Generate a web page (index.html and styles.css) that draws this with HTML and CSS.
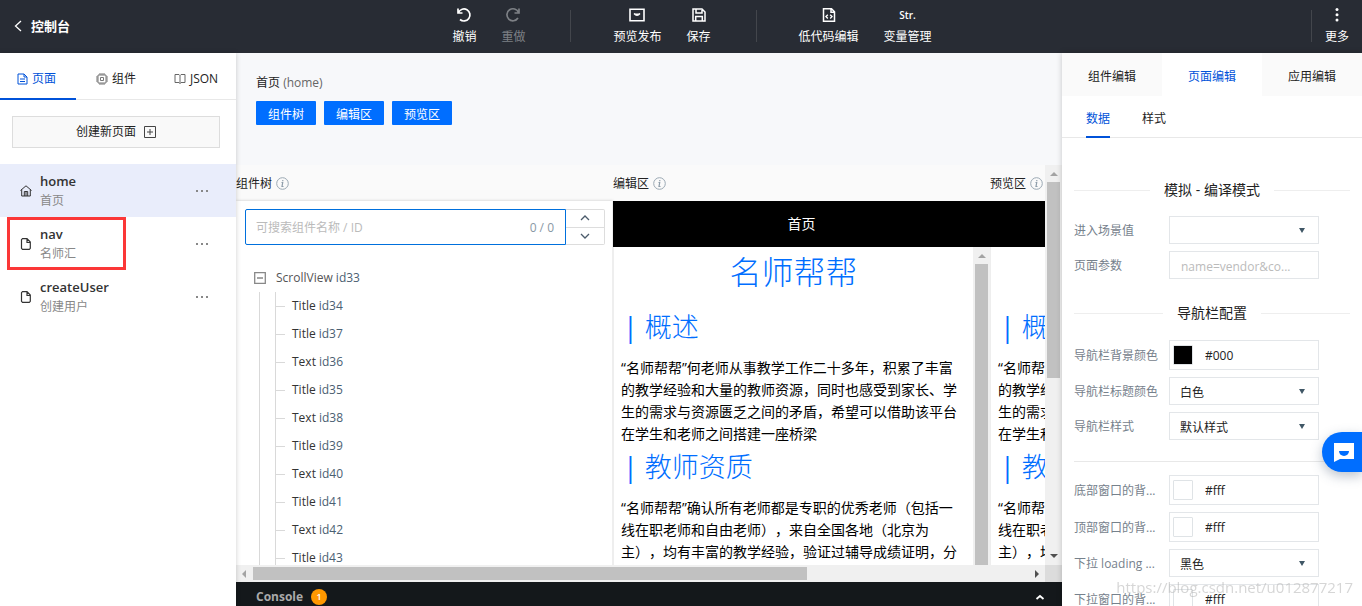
FILE: index.html
```
<!DOCTYPE html>
<html lang="zh-CN">
<head>
<meta charset="utf-8">
<title>控制台</title>
<link rel="stylesheet" href="styles.css">
</head>
<body>
<div class="app">
  <header class="topbar">
    <a class="back" href="#">
      <svg width="8" height="12" viewBox="0 0 8 12"><path d="M7 1 1.500 6 7 11" fill="none" stroke="#fff" stroke-width="1.300"/></svg>
      <span>控制台</span>
    </a>
    <nav class="tools">
      <div class="tool-group">
        <button class="tool"><svg width="16" height="16" viewBox="0 0 16 16"><path d="M2 1.500v4.500h4.500M2.500 5.500A6 6 0 1 1 4 12.500" fill="none" stroke="#fff" stroke-width="1.700"/></svg><span>撤销</span></button>
        <button class="tool tool-off"><svg width="16" height="16" viewBox="0 0 16 16"><path d="M14 1.500v4.500H9.500M13.500 5.500A6 6 0 1 0 13 11" fill="none" stroke="#7d8085" stroke-width="1.700"/></svg><span>重做</span></button>
      </div>
      <div class="tool-group">
        <button class="tool"><svg width="16" height="16" viewBox="0 0 16 16"><path d="M1 2.200h14v11.600H1z" fill="none" stroke="#fff" stroke-width="1.600"/><path d="M5 6.500q3 3.500 6 0" fill="#fff" stroke="#fff" stroke-width="1.300"/></svg><span>预览发布</span></button>
        <button class="tool"><svg width="16" height="16" viewBox="0 0 16 16"><path d="M2 2h9l3 3v9H2zM5 2v4h6V3M4.700 14V9.500h6.600V14" fill="none" stroke="#fff" stroke-width="1.500"/></svg><span>保存</span></button>
      </div>
      <div class="tool-group">
        <button class="tool"><svg width="16" height="16" viewBox="0 0 16 16"><path d="M2.500 1.700h8l3 3v9.600h-11zM10 2v3.200h3.500" fill="none" stroke="#fff" stroke-width="1.500"/><path d="M6.800 7.800 5 9.600l1.800 1.800M9.200 7.800 11 9.600l-1.800 1.800" fill="none" stroke="#fff" stroke-width="1.400"/></svg><span>低代码编辑</span></button>
        <button class="tool"><b class="str">Str.</b><span>变量管理</span></button>
      </div>
    </nav>
    <button class="tool more"><svg width="16" height="16" viewBox="0 0 16 16"><g fill="#fff"><circle cx="8" cy="2.500" r="1.500"/><circle cx="8" cy="7.700" r="1.500"/><circle cx="8" cy="13" r="1.500"/></g></svg><span>更多</span></button>
  </header>

  <div class="body">
    <aside class="pages">
      <nav class="page-tabs">
        <button class="page-tab on"><svg width="11" height="12" viewBox="0 0 11 12"><path d="M1 1h6l3 3v7H1zM7 1v3h3M3 6h5M3 8.500h5" fill="none" stroke="#0052d9"/></svg>页面</button>
        <button class="page-tab"><svg width="12" height="12" viewBox="0 0 12 12"><path d="M2 2h8v8H2zM4.500 4.500h3v3h-3zM4 0v2M6 0v2M8 0v2M4 10v2M6 10v2M8 10v2M0 4h2M0 6h2M0 8h2M10 4h2M10 6h2M10 8h2" fill="none" stroke="#777"/></svg>组件</button>
        <button class="page-tab"><svg width="12" height="12" viewBox="0 0 12 12"><path d="M1 1.500h4l1 1 1-1h4v8H7l-1 1-1-1H1zM6 2.500v8" fill="none" stroke="#666"/></svg>JSON</button>
      </nav>
      <button class="create">创建新页面
        <svg width="12" height="12" viewBox="0 0 12 12"><path d="M.5.5h11v11H.5zM6 3v6M3 6h6" fill="none" stroke="#444"/></svg>
      </button>
      <ul class="page-list">
        <li class="page current">
          <svg width="12" height="12" viewBox="0 0 12 12"><path d="M.5 5.500 6 .8l5.500 4.700M1.700 4.500V11h8.600V4.500M4.300 11V6.500h3.400V11M6 7v4" fill="none" stroke="#333"/></svg>
          <div class="page-name"><b>home</b><span>首页</span></div><button class="dots" aria-label="更多操作"><i></i><i></i><i></i></button>
        </li>
        <li class="page">
          <svg width="12" height="12" viewBox="0 0 12 12"><path d="M2.500.7H7L10.300 4v6.300l-1 1H2.500l-1-1V1.700zM7 1v3.500h3" fill="none" stroke="#333" stroke-width="1.200"/></svg>
          <div class="page-name"><b>nav</b><span>名师汇</span></div><button class="dots" aria-label="更多操作"><i></i><i></i><i></i></button>
          <div class="mark"></div>
        </li>
        <li class="page">
          <svg width="12" height="12" viewBox="0 0 12 12"><path d="M2.500.7H7L10.300 4v6.300l-1 1H2.500l-1-1V1.700zM7 1v3.500h3" fill="none" stroke="#333" stroke-width="1.200"/></svg>
          <div class="page-name"><b>createUser</b><span>创建用户</span></div><button class="dots" aria-label="更多操作"><i></i><i></i><i></i></button>
        </li>
      </ul>
    </aside>

    <main class="center">
      <section class="intro">
        <h1>首页 <small>(home)</small></h1>
        <div class="intro-buttons"><button>组件树</button><button>编辑区</button><button>预览区</button></div>
      </section>
      <section class="workspace">
        <div class="viewport">
          <div class="columns">
            <section class="column">
              <h2><span>组件树</span> <svg width="13" height="13" viewBox="0 0 13 13"><circle cx="6.500" cy="6.500" r="5.800" fill="none" stroke="#9aa8b3"/><path d="M6.800 3v1.300M5.500 5.500h1.200L6 9.500h1.500" fill="none" stroke="#8e9daa" stroke-width="1.200"/></svg></h2>
              <div class="tree-panel">
                <div class="search">
                  <label class="search-box"><input type="text" placeholder="可搜索组件名称 / ID"><span>0 / 0</span></label>
                  <div class="steps">
                    <button aria-label="上一个"><svg width="10" height="6" viewBox="0 0 10 6"><path d="m1 5 4-4 4 4" fill="none" stroke="#4b5b6b" stroke-width="1.300"/></svg></button>
                    <button aria-label="下一个"><svg width="10" height="6" viewBox="0 0 10 6"><path d="m1 1 4 4 4-4" fill="none" stroke="#4b5b6b" stroke-width="1.300"/></svg></button>
                  </div>
                </div>
                <div class="root">
                  <svg width="12" height="12" viewBox="0 0 12 12"><path d="M.7.7h10.600v10.600H.7zM3 6h6" fill="none" stroke="#888" stroke-width="1.300"/></svg>
                  <span>ScrollView <em>id33</em></span>
                </div>
                <div class="branch">
                  <ul class="nodes">
                    <li>Title <em>id34</em></li>
                    <li>Title <em>id37</em></li>
                    <li>Text <em>id36</em></li>
                    <li>Title <em>id35</em></li>
                    <li>Text <em>id38</em></li>
                    <li>Title <em>id39</em></li>
                    <li>Text <em>id40</em></li>
                    <li>Title <em>id41</em></li>
                    <li>Text <em>id42</em></li>
                    <li>Title <em>id43</em></li>
                  </ul>
                </div>
              </div>
            </section>
            <section class="column">
              <h2><span>编辑区</span> <svg width="13" height="13" viewBox="0 0 13 13"><circle cx="6.500" cy="6.500" r="5.800" fill="none" stroke="#9aa8b3"/><path d="M6.800 3v1.300M5.500 5.500h1.200L6 9.500h1.500" fill="none" stroke="#8e9daa" stroke-width="1.200"/></svg></h2>
              <div class="phone-bar">首页</div>
              <div class="phone">
                <article class="doc">
                  <h3>名师帮帮</h3>
                  <h4><b>|</b> 概述</h4>
                  <p>“名师帮帮”何老师从事教学工作二十多年，积累了丰富的教学经验和大量的教师资源，同时也感受到家长、学生的需求与资源匮乏之间的矛盾，希望可以借助该平台在学生和老师之间搭建一座桥梁</p>
                  <h4><b>|</b> 教师资质</h4>
                  <p>“名师帮帮”确认所有老师都是专职的优秀老师（包括一线在职老师和自由老师），来自全国各地（北京为主），均有丰富的教学经验，验证过辅导成绩证明，分</p>
                </article>
                <div class="vbar"><i class="up"></i><div class="thumb"></div></div>
              </div>
            </section>
            <section class="column">
              <h2><span>预览区</span> <svg width="13" height="13" viewBox="0 0 13 13"><circle cx="6.500" cy="6.500" r="5.800" fill="none" stroke="#9aa8b3"/><path d="M6.800 3v1.300M5.500 5.500h1.200L6 9.500h1.500" fill="none" stroke="#8e9daa" stroke-width="1.200"/></svg></h2>
              <div class="phone-bar"></div>
              <div class="phone">
                <article class="doc">
                  <h3>名师帮帮</h3>
                  <h4><b>|</b> 概述</h4>
                  <p>“名师帮帮”何老师从事教学工作二十多年，积累了丰富的教学经验和大量的教师资源，同时也感受到家长、学生的需求与资源匮乏之间的矛盾，希望可以借助该平台在学生和老师之间搭建一座桥梁</p>
                  <h4><b>|</b> 教师资质</h4>
                  <p>“名师帮帮”确认所有老师都是专职的优秀老师（包括一线在职老师和自由老师），来自全国各地（北京为主），均有丰富的教学经验，验证过辅导成绩证明，分</p>
                </article>
                <div class="vbar"><i class="up"></i><div class="thumb"></div></div>
              </div>
            </section>
          </div>
        </div>
        <div class="vbar"><i class="up"></i><div class="thumb half"></div><i class="down"></i></div>
        <div class="hbar"><i class="left"></i><div class="hthumb"></div><i class="right"></i></div>
        <div class="corner"></div>
      </section>
      <footer class="console">
        <b>Console</b><span class="count">1</span>
        <svg width="10" height="7" viewBox="0 0 10 7"><path d="m1.500 5 3.500-3 3.500 3" fill="none" stroke="#fff" stroke-width="1.800"/></svg>
      </footer>
    </main>

    <aside class="props">
      <nav class="prop-tabs"><button>组件编辑</button><button class="on">页面编辑</button><button>应用编辑</button></nav>
      <nav class="sub-tabs"><button class="on">数据</button><button>样式</button></nav>
      <form class="fields">
        <h5>模拟 - 编译模式</h5>
        <div class="field"><label for="scene">进入场景值</label><div class="pick"><select id="scene"><option></option></select></div></div>
        <div class="field"><label for="param">页面参数</label><input id="param" class="box" type="text" placeholder="name=vendor&amp;co..."></div>
        <h5 class="second">导航栏配置</h5>
        <div class="field"><label for="navbg">导航栏背景颜色</label><div class="color"><input type="color" value="#000000" aria-label="选择颜色"><input id="navbg" type="text" value="#000"></div></div>
        <div class="field"><label for="navtitle">导航栏标题颜色</label><div class="pick"><select id="navtitle"><option>白色</option></select></div></div>
        <div class="field"><label for="navstyle">导航栏样式</label><div class="pick"><select id="navstyle"><option>默认样式</option></select></div></div>
        <hr>
        <div class="field"><label for="bottombg">底部窗口的背...</label><div class="color"><input type="color" value="#ffffff" aria-label="选择颜色"><input id="bottombg" type="text" value="#fff"></div></div>
        <div class="field"><label for="topbg">顶部窗口的背...</label><div class="color"><input type="color" value="#ffffff" aria-label="选择颜色"><input id="topbg" type="text" value="#fff"></div></div>
        <div class="field"><label for="loading">下拉 loading ...</label><div class="pick"><select id="loading"><option>黑色</option></select></div></div>
        <div class="field"><label for="pullbg">下拉窗口的背...</label><div class="color"><input type="color" value="#ffffff" aria-label="选择颜色"><input id="pullbg" type="text" value="#fff"></div></div>
      </form>
    </aside>
  </div>
</div>
<button class="chat" aria-label="客服"><svg width="20" height="20" viewBox="0 0 20 20"><path d="M0 1h20v16H6l-6 3z" fill="#fff"/><path d="M5 9h10a5 5 0 0 1-10 0z" fill="#006eff"/></svg></button>
<div class="watermark">https://blog.csdn.net/u012877217</div>
</body>
</html>
```
FILE: styles.css
```
* { box-sizing: border-box; }
body, h1, h2, h3, h4, h5, p, ul { margin: 0; padding: 0; }
body, button, input, select {
  font: 12px/18px "Open Sans", "Noto Sans CJK SC", sans-serif;
  color: #222;
}
button { border: 0; padding: 0; background: none; }
input, select { outline: 0; }
ul { list-style: none; }
svg { flex: none; display: block; }
em { font-style: normal; color: #4a6072; }

.app { display: flex; flex-direction: column; height: 100vh; overflow: hidden; background: #fff; }

/* Top bar */
.topbar {
  display: grid; grid-template-columns: 1fr auto 1fr; align-items: center;
  flex: none; height: 53px; padding-bottom: 1px; background: #282c34; color: #fff;
}
.back { display: flex; align-items: center; gap: 9px; padding-left: 14px; color: #fff; font-size: 13px; font-weight: 700; text-decoration: none; }
.tools { display: flex; padding-left: 22px; }
.tool-group { display: flex; gap: 25px; padding: 0 45px 0 42px; height: 32px; align-items: center; }
.tool-group + .tool-group { border-left: 1px solid #43464c; }
.tool-group:first-child { padding-left: 0; }
.tool-group:last-child { padding-right: 0; }
.tool { display: flex; flex-direction: column; align-items: center; gap: 5px; color: #fff; }
.tool-off { color: #7d8085; }
.str { height: 16px; font-size: 10px; line-height: 16px; font-weight: 600; }
.more { justify-self: end; height: 32px; justify-content: center; padding: 0 13px; border-left: 1px solid #43464c; }

.body { display: flex; flex: 1; min-height: 0; }

/* Page list */
.pages { flex: none; width: 236px; position: relative; z-index: 1; background: #fff; box-shadow: 0 0 5px rgba(0,0,0,.2); }
.page-tabs { display: grid; grid-template-columns: 76px 1fr 1fr; height: 47px; border-bottom: 1px solid #e8e8e8; }
.page-tab { display: flex; align-items: center; justify-content: center; gap: 4px; height: 47px; padding-top: 5px; }
.page-tab.on { padding: 6px 3px 0 0; color: #0052d9; border-bottom: 2px solid #0052d9; }
.create {
  display: flex; align-items: center; justify-content: center; gap: 8px;
  width: 208px; height: 32px; margin: 16px 12px; border: 1px solid #ddd; background: #f9f9f9;
}
.page { position: relative; display: flex; align-items: center; height: 53px; padding: 0 28px 0 20px; gap: 8px; }
.page.current { background: #e9edfb; }
.page-name { flex: 1; display: flex; flex-direction: column; }
.page-name b { font-size: 13px; line-height: 20px; font-weight: 600; color: #333; }
.page-name span { line-height: 20px; color: #888; }
.dots { display: flex; gap: 3px; }
.dots i { width: 2px; height: 2px; background: #888; }
.mark { position: absolute; top: 0; left: 7px; width: 119px; height: 53px; border: 3px solid #fb3737; }

/* Centre */
.center { flex: 1; min-width: 0; display: flex; flex-direction: column; }
.intro { flex: none; height: 112px; padding: 21px 19px 21px 20px; background: #f7f8fa; }
.intro h1 { font-size: 12px; line-height: 18px; font-weight: 400; }
.intro small { font-size: 12px; color: #666; }
.intro-buttons { display: flex; gap: 8px; margin-top: 9px; }
.intro-buttons button { width: 60px; height: 24px; padding-top: 4px; border-radius: 1px; background: #006eff; color: #fff; }
.workspace { flex: 1; min-height: 0; display: grid; grid-template: minmax(0, 1fr) 17px / minmax(0, 1fr) 17px; }
.viewport { overflow: hidden; background: #fafafa; }
.columns { display: grid; grid-template-columns: repeat(3, 377px); grid-template-rows: minmax(0, 1fr); height: 100%; }
.column { display: flex; flex-direction: column; min-height: 0; }
.column h2 { flex: none; display: flex; align-items: center; gap: 4px; height: 36px; font-size: 12px; font-weight: 400; }
.column h2 span { padding-top: 2px; }
.tree-panel { flex: 1; min-height: 0; overflow: hidden; padding: 8px 7px 0 9px; background: #fff; border-right: 1px solid #eee; box-shadow: 0 0 3px rgba(0,0,0,.2); }
.search { display: flex; height: 36px; }
.search-box { flex: 1; display: flex; align-items: center; padding: 2px 11px 0 10px; border: 1px solid #0070dd; border-radius: 2px 0 0 2px; color: #8998a5; }
.search-box input { flex: 1; min-width: 0; padding: 0; border: 0; }
::placeholder { color: #bbb; opacity: 1; }
.steps { width: 39px; display: grid; border: 1px solid #ddd; border-left: 0; border-radius: 0 2px 2px 0; }
.steps button { display: grid; place-items: center; }
.steps button + button { border-top: 1px solid #ddd; }
.root { display: flex; align-items: center; gap: 10px; height: 28px; margin: 19px 0 0 9px; color: #555; }
.branch { margin-left: 14px; padding-left: 15px; border-left: 1px solid #d9d9d9; }
.nodes { border-left: 1px solid #d9d9d9; }
.nodes li { display: flex; align-items: center; gap: 3px; height: 28px; color: #333; }
.nodes li::before { content: ""; width: 9px; margin-right: 4px; border-top: 1px solid #d9d9d9; }

.phone-bar { flex: none; height: 46px; background: #000; color: #fff; font-size: 14px; line-height: 46px; text-align: center; }
.phone { flex: 1; min-height: 0; display: flex; background: #fff; border-left: 1px solid #eee; }
.doc { flex: 1; min-width: 0; overflow: hidden; padding: 0 7px; font-size: 14px; line-height: 22px; color: #000; text-spacing-trim: space-all; }
.doc h3, .doc h4 { font-weight: 300; color: #006eff; }
.doc h3 { font-size: 32px; line-height: 50px; text-align: center; }
.doc h4 { font-size: 27px; line-height: 44px; padding: 0 2px 8px; }
.doc h4 b { font-weight: 400; }
.doc h3 + h4 { padding-top: 8px; }

/* Scroll bars */
.vbar { flex: none; width: 17px; display: flex; flex-direction: column; align-items: center; background: #f0f0f0; }
.vbar .thumb { width: 13px; flex: 1; background: #c1c1c1; }
.vbar .half { flex: none; height: 49%; margin-bottom: auto; }
.vbar i, .hbar i { border: 4px solid transparent; }
.vbar .up { border-top: 0; border-bottom-color: #a3a3a3; margin: 7px 0 6px; }
.vbar .down { border-bottom: 0; border-top-color: #505050; margin: 0 0 7px; }
.hbar { display: flex; align-items: center; background: #f0f0f0; }
.hbar .left { border-left: 0; border-right-color: #a3a3a3; margin: 0 7px 0 6px; }
.hbar .right { border-right: 0; border-left-color: #505050; margin: 0 6px 0 auto; }
.hthumb { width: 554px; height: 13px; background: #c1c1c1; }
.corner { background: #dcdcdc; }

.console { flex: none; display: flex; align-items: center; gap: 8px; height: 24px; padding: 6px 17px 0 20px; background: #14181b; color: #aaa; }
.console svg { margin-left: auto; }
.count { width: 16px; height: 16px; border-radius: 8px; background: #ff9800; color: #fff; font-size: 9px; font-weight: 600; line-height: 16px; text-align: center; }

/* Properties */
.props { flex: none; width: 300px; position: relative; z-index: 1; overflow: hidden; background: #fff; box-shadow: 0 0 6px rgba(0,0,0,.2); }
.prop-tabs { display: grid; grid-template-columns: repeat(3, 1fr); height: 43px; }
.prop-tabs button { background: #fafafa; padding-top: 5px; }
.prop-tabs .on { background: #fff; color: #0052d9; }
.sub-tabs { display: flex; gap: 32px; height: 42px; padding-left: 24px; border-bottom: 1px solid #e8e8e8; }
.sub-tabs button { height: 42px; padding-top: 5px; border-bottom: 2px solid transparent; }
.sub-tabs .on { color: #0052d9; border-color: #0052d9; }
.fields { display: flex; flex-direction: column; gap: 7px; padding: 40px 12px 0; }
.fields h5 { display: flex; align-items: center; gap: 14px; height: 24px; font-size: 14px; font-weight: 400; line-height: 24px; margin-bottom: 7px; }
.fields h5::before, .fields h5::after { content: ""; flex: 1; border-top: 1px solid #eee; }
.fields h5.second { margin: 15px 0 8px; }
.fields hr { width: 100%; margin: 14px 0 6px; border: 0; border-top: 1px solid #e8e8e8; }
.field { display: flex; align-items: center; }
.field label { flex: none; width: 84px; margin-right: 11px; padding-top: 2px; white-space: nowrap; color: #76818c; }
.pick { position: relative; width: 150px; }
.pick::after { content: ""; position: absolute; top: 12px; right: 14px; border: 3px solid transparent; border-top: 5px solid #405766; border-bottom: 0; }
.pick select, .box { width: 150px; height: 28px; padding: 3px 11px 0; border: 1px solid #e3e6e9; border-radius: 0; background: #fff; appearance: none; display: block; }
.pick select { padding-left: 10px; }
.color { display: flex; align-items: center; gap: 12px; width: 150px; height: 30px; padding: 0 3px; border: 1px solid #e3e6e9; }
.color input[type="color"] { flex: none; appearance: none; width: 20px; height: 20px; padding: 0; border: 1px solid #dfe3e6; border-radius: 1px; background: none; }
.color input[type="color"]::-webkit-color-swatch-wrapper { padding: 0; }
.color input[type="color"]::-webkit-color-swatch { border: 0; }
.color input[type="text"] { flex: 1; min-width: 0; padding: 2px 0 0; border: 0; }

.chat { position: fixed; z-index: 3; top: 432px; right: 0; width: 40px; height: 40px; padding-left: 12px; border-radius: 20px 0 0 20px; background: #006eff; box-shadow: 0 4px 12px rgba(60,80,110,.35); }
.watermark { position: fixed; z-index: 4; right: 9px; bottom: 7px; font-size: 15px; line-height: 24px; color: rgba(180,180,180,.55); pointer-events: none; }
```
